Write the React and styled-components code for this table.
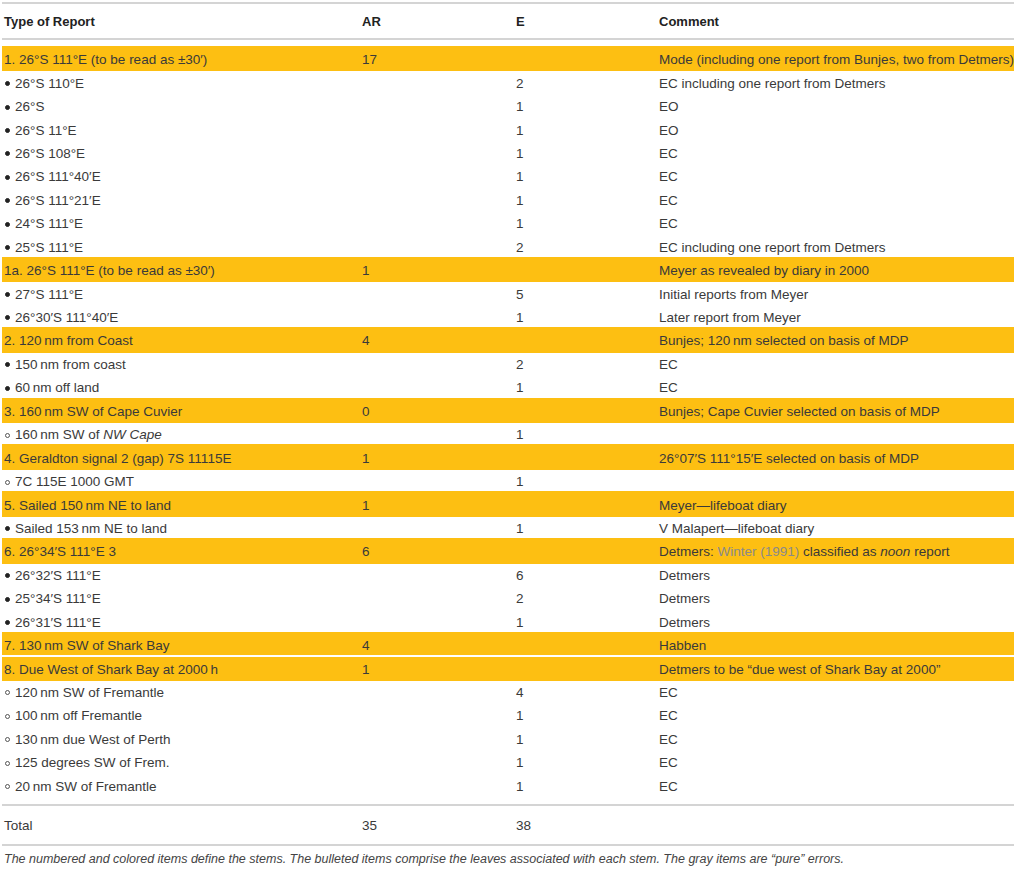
import React from "react";
import styled, { createGlobalStyle } from "styled-components";

const GlobalStyle = createGlobalStyle`
  html, body {
    margin: 0;
    padding: 0;
    background: #fff;
  }
  body {
    font-family: "Liberation Sans", Arial, sans-serif;
    color: #3a3a3a;
  }
`;

const T = "\u2009";

const rows = [
  { h: true, type: "1. 26°S 111°E (to be read as ±30′)", ar: "17", c: "Mode (including one report from Bunjes, two from Detmers)" },
  { b: "dot", type: "26°S 110°E", e: "2", c: "EC including one report from Detmers" },
  { b: "dot", type: "26°S", e: "1", c: "EO" },
  { b: "dot", type: "26°S 11°E", e: "1", c: "EO" },
  { b: "dot", type: "26°S 108°E", e: "1", c: "EC" },
  { b: "dot", type: "26°S 111°40′E", e: "1", c: "EC" },
  { b: "dot", type: "26°S 111°21′E", e: "1", c: "EC" },
  { b: "dot", type: "24°S 111°E", e: "1", c: "EC" },
  { b: "dot", type: "25°S 111°E", e: "2", c: "EC including one report from Detmers" },
  { h: true, type: "1a. 26°S 111°E (to be read as ±30′)", ar: "1", c: "Meyer as revealed by diary in 2000" },
  { b: "dot", type: "27°S 111°E", e: "5", c: "Initial reports from Meyer" },
  { b: "dot", type: "26°30′S 111°40′E", e: "1", c: "Later report from Meyer" },
  { h: true, type: `2. 120${T}nm from Coast`, ar: "4", c: `Bunjes; 120${T}nm selected on basis of MDP` },
  { b: "dot", type: `150${T}nm from coast`, e: "2", c: "EC" },
  { b: "dot", type: `60${T}nm off land`, e: "1", c: "EC" },
  { h: true, type: `3. 160${T}nm SW of Cape Cuvier`, ar: "0", c: "Bunjes; Cape Cuvier selected on basis of MDP" },
  { b: "ring", type: <>160{T}nm SW of <em>NW Cape</em></>, e: "1", c: "" },
  { h: true, type: "4. Geraldton signal 2 (gap) 7S 11115E", ar: "1", c: "26°07′S 111°15′E selected on basis of MDP" },
  { b: "ring", type: "7C 115E 1000 GMT", e: "1", c: "" },
  { h: true, type: `5. Sailed 150${T}nm NE to land`, ar: "1", c: "Meyer—lifeboat diary" },
  { b: "dot", type: `Sailed 153${T}nm NE to land`, e: "1", c: "V Malapert—lifeboat diary" },
  {
    h: true,
    type: "6. 26°34′S 111°E 3",
    ar: "6",
    c: <>Detmers: <Ref>Winter (1991)</Ref> classified as <em>noon</em> report</>,
  },
  { b: "dot", type: "26°32′S 111°E", e: "6", c: "Detmers" },
  { b: "dot", type: "25°34′S 111°E", e: "2", c: "Detmers" },
  { b: "dot", type: "26°31′S 111°E", e: "1", c: "Detmers" },
  { h: true, type: `7. 130${T}nm SW of Shark Bay`, ar: "4", c: "Habben" },
  { h: true, type: `8. Due West of Shark Bay at 2000${T}h`, ar: "1", c: "Detmers to be “due west of Shark Bay at 2000”" },
  { b: "ring", type: `120${T}nm SW of Fremantle`, e: "4", c: "EC" },
  { b: "ring", type: `100${T}nm off Fremantle`, e: "1", c: "EC" },
  { b: "ring", type: `130${T}nm due West of Perth`, e: "1", c: "EC" },
  { b: "ring", type: "125 degrees SW of Frem.", e: "1", c: "EC" },
  { b: "ring", type: `20${T}nm SW of Fremantle`, e: "1", c: "EC" },
];

function Ref({ children }) {
  return <RefText>{children}</RefText>;
}

function App() {
  return (
    <Page>
      <GlobalStyle />
      <Table>
        <Rule />
        <HeadRow>
          <Cell>Type of Report</Cell>
          <Cell>AR</Cell>
          <Cell>E</Cell>
          <Cell>Comment</Cell>
        </HeadRow>
        <Rule />
        <Body>
          {rows.map((r, i) => (
            <Row
              key={i}
              $stem={r.h}
              $joined={r.h && i > 0 && rows[i - 1].h}
            >
              <Cell>
                {r.b && <Bullet $hollow={r.b === "ring"} />}
                {r.type}
              </Cell>
              <Cell>{r.ar}</Cell>
              <Cell>{r.e}</Cell>
              <Cell>{r.c}</Cell>
            </Row>
          ))}
        </Body>
        <Rule />
        <TotalRow>
          <Cell>Total</Cell>
          <Cell>35</Cell>
          <Cell>38</Cell>
          <Cell />
        </TotalRow>
        <Rule />
      </Table>
      <Caption>
        The numbered and colored items define the stems. The bulleted items
        comprise the leaves associated with each stem. The gray items are
        “pure” errors.
      </Caption>
    </Page>
  );
}

const Page = styled.div`
  width: 1017px;
  height: 869px;
  padding-top: 2px;
  box-sizing: border-box;
  overflow: hidden;
`;

const Table = styled.div`
  margin: 0 3px 0 2px;
  font-size: 13.5px;
`;

const Rule = styled.div`
  height: 2px;
  background: #d4d4d4;
`;

const grid = `
  display: grid;
  grid-template-columns: 358px 154px 143px 1fr;
  align-items: center;
`;

const Cell = styled.div`
  padding-left: 2px;
  white-space: nowrap;
`;

const HeadRow = styled.div`
  ${grid}
  height: 34px;
  font-weight: 700;
  font-size: 13px;
  color: #222;
`;

const Body = styled.div`
  padding: 8px 0 6px;
`;

const stemShadow = (p) => {
  if (p.$joined) return "0 -2px 0 #fff";
  if (p.$stem) return "0 -2px 0 #fdbf12";
  return "none";
};

const Row = styled.div`
  ${grid}
  height: 23.45px;
  background: ${(p) => (p.$stem ? "#fdbf12" : "transparent")};
  box-shadow: ${stemShadow};
`;

const TotalRow = styled.div`
  ${grid}
  height: 38px;
`;

const Bullet = styled.span`
  display: inline-block;
  box-sizing: border-box;
  width: 5px;
  height: 5px;
  border-radius: 50%;
  margin: 0 5px 1px 1px;
  vertical-align: middle;
  background: ${(p) => (p.$hollow ? "transparent" : "#222")};
  border: 1px solid ${(p) => (p.$hollow ? "#555" : "#222")};
`;

const RefText = styled.span`
  color: #8a8a8a;
`;

const Caption = styled.div`
  padding: 6px 0 0 4px;
  font-size: 12.5px;
  line-height: 14px;
  font-style: italic;
  color: #444;
  white-space: nowrap;
`;

export default App;
